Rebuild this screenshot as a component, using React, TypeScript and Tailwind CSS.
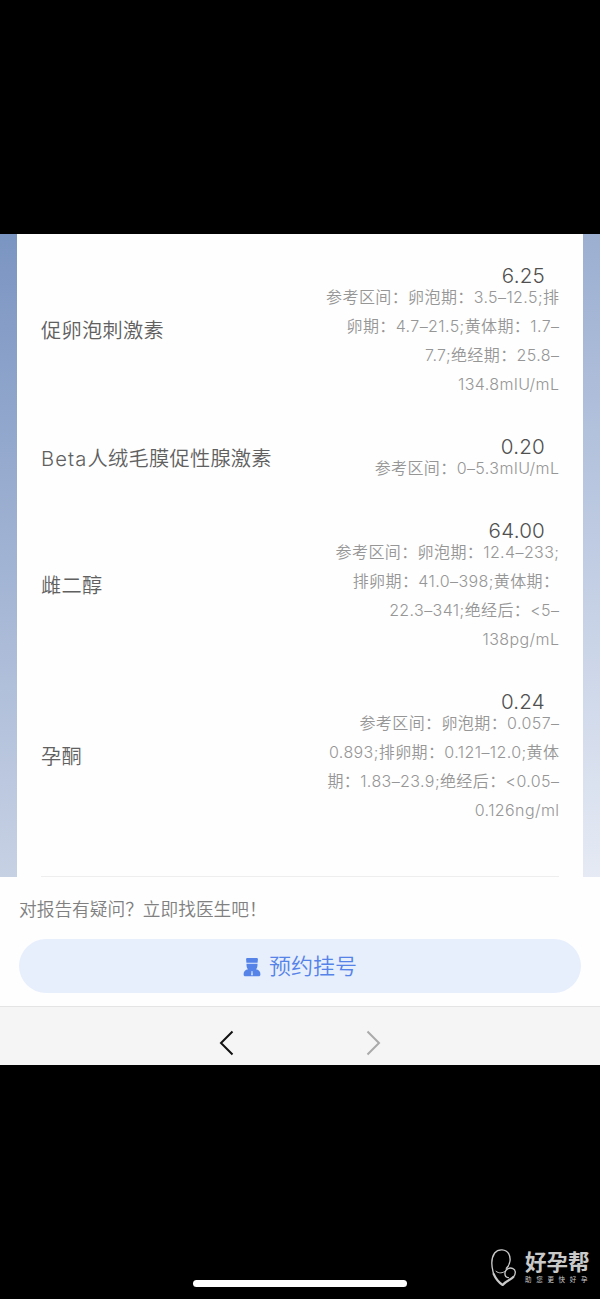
type ReportItemType = {
  name: string;
  value: string;
  range: string[];
};

const items: ReportItemType[] = [
  {
    name: "促卵泡刺激素",
    value: "6.25",
    range: [
      "参考区间：卵泡期：3.5–12.5;排",
      "卵期：4.7–21.5;黄体期：1.7–",
      "7.7;绝经期：25.8–",
      "134.8mIU/mL",
    ],
  },
  {
    name: "Beta人绒毛膜促性腺激素",
    value: "0.20",
    range: ["参考区间：0–5.3mIU/mL"],
  },
  {
    name: "雌二醇",
    value: "64.00",
    range: [
      "参考区间：卵泡期：12.4–233;",
      "排卵期：41.0–398;黄体期：",
      "22.3–341;绝经后：<5–",
      "138pg/mL",
    ],
  },
  {
    name: "孕酮",
    value: "0.24",
    range: [
      "参考区间：卵泡期：0.057–",
      "0.893;排卵期：0.121–12.0;黄体",
      "期：1.83–23.9;绝经后：<0.05–",
      "0.126ng/ml",
    ],
  },
];

const ReportItem = ({ name, value, range }: ReportItemType) => {
  // latin letters at the start of a name are spaced wider than the hanzi
  const latin = name.match(/^[A-Za-z]+/)?.[0] ?? "";

  return (
    <div className="flex items-center justify-between">
      <h2 className="pt-[2px] text-[20.2px] leading-7 tracking-[0.3px] text-[#606060]">
        {latin && <span className="tracking-[1.1px]">{latin}</span>}
        {name.slice(latin.length)}
      </h2>
      <div className="text-right">
        <p className="h-[22px] pr-[14px] text-[20.6px] leading-[30px] tracking-[0.2px] text-[#505050]">
          {value}
        </p>
        {range.map((line) => (
          <p
            key={line}
            className="-mr-[0.4px] whitespace-nowrap text-[16px] leading-[29px] tracking-[0.4px] text-[#969696]"
          >
            {line}
          </p>
        ))}
      </div>
    </div>
  );
};

const DoctorIcon = () => (
  <svg width="18" height="20" viewBox="0 0 18 20" fill="#5683e8">
    <path d="M4.2 1h9.6q1.200 0 1.100 1.200L14.600 5.700H3.400L3.100 2.200Q3 1 4.200 1Z" />
    <path d="M3.500 6.700h11c.1 2.600-.3 4.300-1.600 5.500 3 .5 4.500 2.200 4.500 5 0 1.500-.6 2.100-1.800 2.100H2.400c-1.200 0-1.800-.6-1.800-2.100 0-2.800 1.500-4.500 4.500-5-1.300-1.200-1.700-2.900-1.600-5.500Z" />
    <path d="M8.600 14h.8l.4 4.200H8.200Z" fill="#e7effd" />
  </svg>
);

const Watermark = () => (
  <div className="flex items-center gap-2 text-[#c9c9c9]">
    <svg
      width="26"
      height="38"
      viewBox="35 25 78 114"
      fill="none"
      stroke="currentColor"
      strokeWidth="4"
      strokeLinecap="round"
      strokeLinejoin="round"
    >
      <path d="M81 86C94 74 95 54 88 42 80 28 57 26 46 40 36 54 36 80 43 103" />
      <path d="M43 103C50 119 58 128 70 136 82 122 94 121 102 112" strokeWidth="6.500" />
      <path d="M102 112C110 104 110 91 101 87 91 82 79 88 77 99 76 107 80 113 87 114" />
      <path d="M50 95C59 102 70 101 78 94" strokeWidth="3" />
    </svg>
    <div className="flex flex-col">
      <span className="text-[21.5px] font-bold leading-[24px]">好孕帮</span>
      <span className="mt-[2px] text-[6.5px] font-normal leading-[8px] tracking-[4.7px]">
        助您更快好孕
      </span>
    </div>
  </div>
);

const App = () => {
  return (
    <div className="flex h-[1299px] w-[600px] flex-col overflow-hidden bg-black font-['Inter','Noto_Sans_CJK_SC',sans-serif] font-[350]">
      <div className="h-[234px] shrink-0" />

      <main className="flex h-[643px] shrink-0">
        <div className="w-[17px] bg-linear-to-b from-[#7b95c2] to-[#c7d1e4]" />
        <section className="flex flex-1 flex-col bg-[#fefefe] px-6 pt-[27px]">
          <div className="flex flex-col gap-[33px]">
            {items.map((item) => (
              <ReportItem key={item.name} {...item} />
            ))}
          </div>
          <div className="mt-auto h-px bg-[#eee]" />
        </section>
        <div className="w-[17px] bg-linear-to-b from-[#9cafd1] to-[#e5eaf4]" />
      </main>

      <footer className="flex h-[129px] shrink-0 flex-col bg-[#fefefe] px-[19px]">
        <p className="mt-[20px] text-[17.7px] leading-[26px] text-[#808080]">
          对报告有疑问？立即找医生吧！
        </p>
        <button
          type="button"
          className="mt-[16px] flex h-[54px] items-center justify-center gap-2 rounded-full bg-[#e7effd] pt-px text-[22px] text-[#5683e8]"
        >
          <DoctorIcon />
          <span>预约挂号</span>
        </button>
      </footer>

      <nav className="flex h-[59px] shrink-0 justify-center gap-[132px] border-t border-[#e4e4e4] bg-[#f5f5f5] pt-[23px]">
        <svg width="15" height="26" viewBox="0 0 15 26" fill="none">
          <path d="M13.500 1.500 2 13l11.500 11.500" stroke="#111" strokeWidth="2" />
        </svg>
        <svg width="15" height="26" viewBox="0 0 15 26" fill="none">
          <path d="M1.500 1.500 13 13 1.500 24.500" stroke="#aaa" strokeWidth="2" />
        </svg>
      </nav>

      <div className="relative flex-1">
        <div className="absolute bottom-[12px] left-[193px] h-[7px] w-[214px] rounded-full bg-white" />
        <div className="absolute left-[491px] top-[183px]">
          <Watermark />
        </div>
      </div>
    </div>
  );
};

export default App;
